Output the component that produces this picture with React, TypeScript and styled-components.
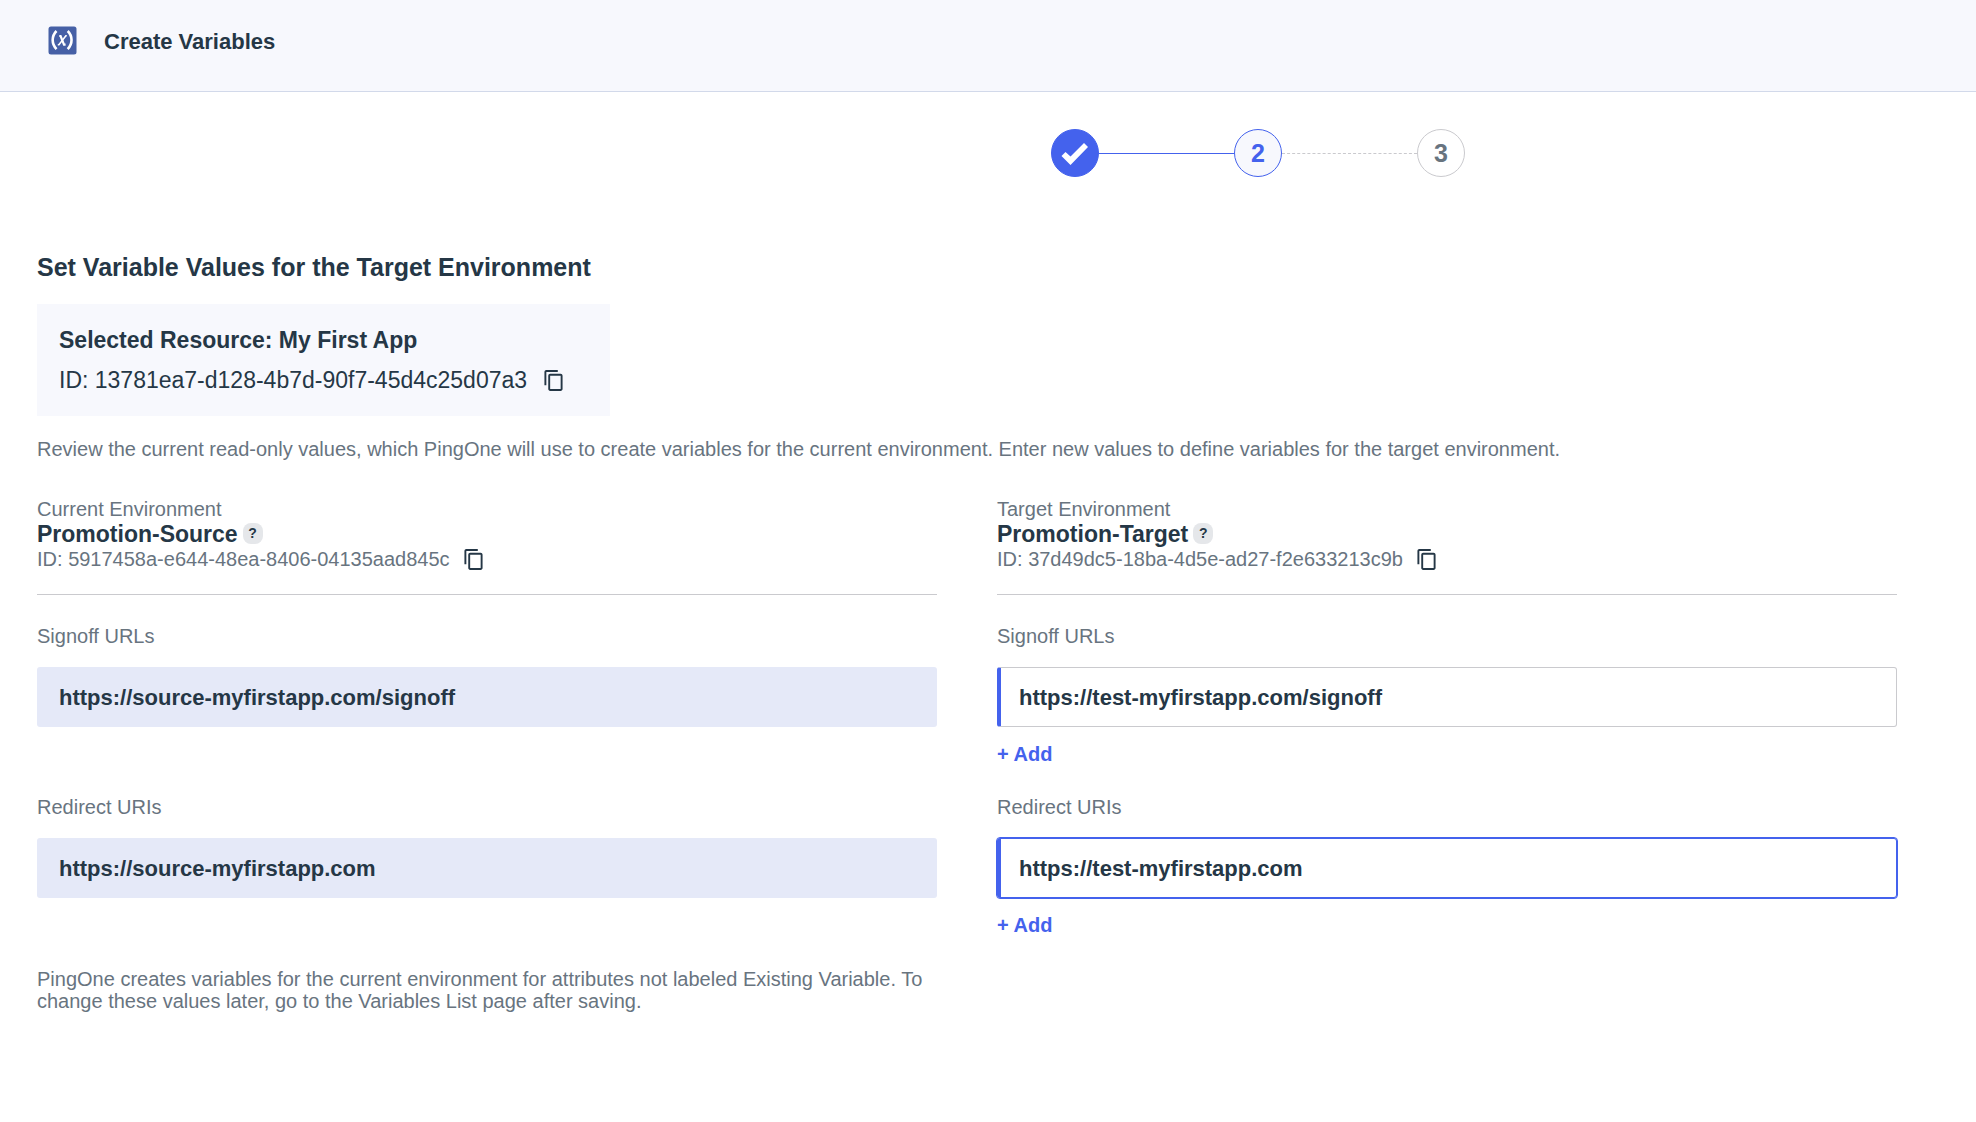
import React, { useId, useState } from "react";
import styled, { createGlobalStyle } from "styled-components";

const ink = "#253746";
const muted = "#68747f";
const blue = "#4462ed";
const rule = "#cacace";
const pale = "#f7f8fd";

const GlobalStyle = createGlobalStyle`
  *, *::before, *::after { box-sizing: border-box; }
  body {
    margin: 0;
    background: #fff;
    color: ${ink};
    font-family: "Liberation Sans", Arial, sans-serif;
  }
  h1, h2, h3, p { margin: 0; }
`;

const Header = styled.header`
  display: flex;
  align-items: flex-start;
  gap: 27px;
  height: 92px;
  padding: 26px 48px 0;
  background: ${pale};
  border-bottom: 1px solid #d2d9ea;
`;

const AppIcon = styled.svg`
  display: block;
  width: 29px;
  height: 29px;
`;

const Title = styled.h1`
  font-size: 22px;
  line-height: 32px;
  font-weight: 700;
`;

const Steps = styled.ol`
  display: flex;
  justify-content: center;
  align-items: center;
  list-style: none;
  margin: 37px 0 0 540px;
  padding: 0;
`;

type StepState = "done" | "current" | "todo";

const Step = styled.li<{ $state: StepState }>`
  display: flex;
  align-items: center;
  justify-content: center;
  width: 48px;
  height: 48px;
  border-radius: 50%;
  border: 1px solid ${(p) => (p.$state === "todo" ? rule : blue)};
  background: ${(p) => ({ done: blue, current: pale, todo: "#fff" })[p.$state]};
  color: ${(p) => (p.$state === "todo" ? muted : blue)};
  font-size: 25px;
  font-weight: 700;
`;

const StepLine = styled.li<{ $dashed?: boolean }>`
  width: 135px;
  border-top: 1px ${(p) => (p.$dashed ? `dashed ${rule}` : `solid ${blue}`)};
`;

const Main = styled.main`
  padding: 74px 79px 40px 37px;
`;

const Heading = styled.h2`
  font-size: 25px;
  line-height: 32px;
  font-weight: 700;
`;

const Resource = styled.section`
  width: fit-content;
  margin-top: 21px;
  padding: 16px 47px 16px 22px;
  background: ${pale};
`;

const ResourceName = styled.h3`
  font-size: 23px;
  line-height: 40px;
  font-weight: 700;
`;

const ResourceId = styled.p`
  display: flex;
  align-items: center;
  gap: 17px;
  font-size: 23px;
  line-height: 40px;
`;

const PlainButton = styled.button`
  padding: 0;
  border: 0;
  background: none;
  font-family: inherit;
  cursor: pointer;
`;

const CopyButton = styled(PlainButton)`
  display: flex;
  color: ${ink};
`;

const CopyIcon = styled.svg`
  display: block;
  width: 19px;
  height: 21px;
`;

const Intro = styled.p`
  margin-top: 21px;
  color: ${muted};
  font-size: 20px;
  line-height: 25px;
`;

const Columns = styled.div`
  display: grid;
  grid-template-columns: 1fr 1fr;
  gap: 60px;
  margin-top: 35px;
`;

const EnvHeader = styled.header`
  padding-bottom: 22px;
  border-bottom: 1px solid ${rule};
  color: ${muted};
  font-size: 20px;
  line-height: 25px;
`;

const EnvName = styled.h3`
  display: flex;
  align-items: flex-start;
  gap: 5px;
  color: ${ink};
  font-size: 23px;
  line-height: 25px;
  font-weight: 700;
`;

const HelpButton = styled(PlainButton)`
  width: 20px;
  height: 21px;
  margin-top: 1px;
  border-radius: 8px;
  background: #e5e7ea;
  color: ${ink};
  font-size: 14px;
  line-height: 21px;
  font-weight: 700;
`;

const EnvId = styled.p`
  display: flex;
  align-items: center;
  gap: 14px;
`;

const Fields = styled.div`
  padding-top: 29px;
`;

const Field = styled.div`
  display: flex;
  flex-direction: column;
  align-items: flex-start;
  min-height: 171px;
`;

const Label = styled.label`
  margin-bottom: 18px;
  color: ${muted};
  font-size: 20px;
  line-height: 25px;
`;

const Input = styled.input<{ $active?: boolean }>`
  width: 100%;
  height: 60px;
  padding: 2px 22px 0;
  border: 1px solid ${(p) => (p.$active ? blue : rule)};
  border-radius: 3px;
  outline: ${(p) => (p.$active ? `1px solid ${blue}` : "none")};
  background: #fff;
  color: ${ink};
  font-family: inherit;
  font-size: 22px;
  font-weight: 700;

  &:not(:read-only) {
    border-left: 4px solid ${blue};
    padding-left: 18px;
  }
  &:read-only {
    background: #e5e9f8;
    border: 0;
  }
`;

const AddButton = styled(PlainButton)`
  margin-top: 15px;
  color: ${blue};
  font-size: 20px;
  line-height: 25px;
  font-weight: 700;
`;

const Note = styled.p`
  margin-top: 2px;
  color: ${muted};
  font-size: 20px;
  line-height: 22px;
`;

function Copy({ label }: { label: string }) {
  return (
    <CopyButton type="button" aria-label={label}>
      <CopyIcon viewBox="0 0 19 22" fill="currentColor" aria-hidden="true">
        <path d="M14 0H2C.9 0 0 .9 0 2v14h2V2h12V0zm3 4H6C4.900 4 4 4.900 4 6v14c0 1.100.9 2 2 2h11c1.100 0 2-.9 2-2V6c0-1.100-.9-2-2-2zm0 16H6V6h11v14z" />
      </CopyIcon>
    </CopyButton>
  );
}

type UrlFieldProps = {
  label: string;
  initial: string;
  editable?: boolean;
  active?: boolean;
};

function UrlField({ label, initial, editable, active }: UrlFieldProps) {
  const id = useId();
  const [value, setValue] = useState(initial);
  return (
    <Field>
      <Label htmlFor={id}>{label}</Label>
      <Input
        id={id}
        type="text"
        value={value}
        readOnly={!editable}
        $active={active}
        onChange={(e) => setValue(e.target.value)}
      />
      {editable && <AddButton type="button">+ Add</AddButton>}
    </Field>
  );
}

type EnvironmentProps = {
  kind: string;
  name: string;
  id: string;
  signoff: string;
  redirect: string;
  editable?: boolean;
  children?: React.ReactNode;
};

function Environment({ kind, name, id, signoff, redirect, editable, children }: EnvironmentProps) {
  return (
    <section>
      <EnvHeader>
        <p>{kind}</p>
        <EnvName>
          {name}
          <HelpButton type="button">?</HelpButton>
        </EnvName>
        <EnvId>
          ID: {id}
          <Copy label="Copy environment ID" />
        </EnvId>
      </EnvHeader>
      <Fields>
        <UrlField label="Signoff URLs" initial={signoff} editable={editable} />
        <UrlField label="Redirect URIs" initial={redirect} editable={editable} active={editable} />
      </Fields>
      {children}
    </section>
  );
}

export default function App() {
  return (
    <>
      <GlobalStyle />
      <Header>
        <AppIcon viewBox="0 0 29 29" aria-hidden="true">
          <rect x="0.500" y="0.500" width="28" height="28" rx="2.500" fill="#4660a6" />
          <g fill="none" stroke="#fff">
            <path d="M8.500 5C3.400 10.200 3.400 18 8.500 23.200" strokeWidth="2.600" />
            <path d="M19.700 5C24.800 10.200 24.800 18 19.700 23.200" strokeWidth="2.600" />
            <path d="M11.300 10H12.600L16 18.600H17.600" strokeWidth="2.200" />
            <path d="M18.800 9.800H17.900L10.900 18.700H9.800" strokeWidth="1.600" />
          </g>
        </AppIcon>
        <Title>Create Variables</Title>
      </Header>
      <Steps>
        <Step $state="done" aria-label="Step 1, complete">
          <svg width="28" height="24" viewBox="0 0 28 24" aria-hidden="true">
            <path d="M0.500 15L4.500 11L9.500 15.500L23 2L27 6L9.500 24Z" fill="#fff" />
          </svg>
        </Step>
        <StepLine aria-hidden="true" />
        <Step $state="current" aria-current="step">2</Step>
        <StepLine $dashed aria-hidden="true" />
        <Step $state="todo">3</Step>
      </Steps>
      <Main>
        <Heading>Set Variable Values for the Target Environment</Heading>
        <Resource>
          <ResourceName>Selected Resource: My First App</ResourceName>
          <ResourceId>
            ID: 13781ea7-d128-4b7d-90f7-45d4c25d07a3
            <Copy label="Copy resource ID" />
          </ResourceId>
        </Resource>
        <Intro>
          Review the current read-only values, which PingOne will use to create variables for the current
          environment. Enter new values to define variables for the target environment.
        </Intro>
        <Columns>
          <Environment
            kind="Current Environment"
            name="Promotion-Source"
            id="5917458a-e644-48ea-8406-04135aad845c"
            signoff="https://source-myfirstapp.com/signoff"
            redirect="https://source-myfirstapp.com"
          >
            <Note>
              PingOne creates variables for the current environment for attributes not labeled Existing
              Variable. To change these values later, go to the Variables List page after saving.
            </Note>
          </Environment>
          <Environment
            kind="Target Environment"
            name="Promotion-Target"
            id="37d49dc5-18ba-4d5e-ad27-f2e633213c9b"
            signoff="https://test-myfirstapp.com/signoff"
            redirect="https://test-myfirstapp.com"
            editable
          />
        </Columns>
      </Main>
    </>
  );
}
